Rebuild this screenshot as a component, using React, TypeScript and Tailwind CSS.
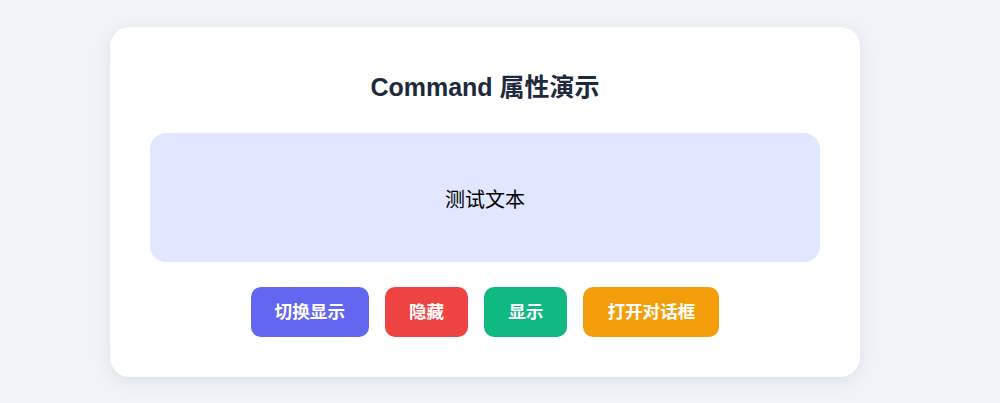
export default function App() {
  const buttons = [
    { label: "切换显示", color: "bg-[#6366f1]" },
    { label: "隐藏", color: "bg-[#ef4444]" },
    { label: "显示", color: "bg-[#10b981]" },
    { label: "打开对话框", color: "bg-[#f59e0b]" },
  ];

  return (
    <main
      className="min-h-screen bg-[#f0f4f8] pt-[27px] pb-[26px]"
      style={{ fontFamily: '"Liberation Sans", "Noto Sans CJK SC", sans-serif' }}
    >
      <div className="ml-[110px] w-[750px] rounded-[20px] bg-white p-10 shadow-[0_4px_20px_rgba(0,0,0,0.08)]">
        <h2 className="mb-[26px] text-center text-[25px] leading-[40px] font-bold text-[#1e293b]">
          Command 属性演示
        </h2>

        <div className="mb-[25px] flex h-[129px] items-center justify-center rounded-2xl bg-[#e0e7ff] pt-1 text-xl text-black">
          测试文本
        </div>

        <div className="flex justify-center gap-4">
          {buttons.map((b) => (
            <button
              key={b.label}
              className={`${b.color} rounded-[10px] px-6 py-3 text-[1.1rem] leading-[26px] font-bold text-white`}
            >
              {b.label}
            </button>
          ))}
        </div>
      </div>
    </main>
  );
}
